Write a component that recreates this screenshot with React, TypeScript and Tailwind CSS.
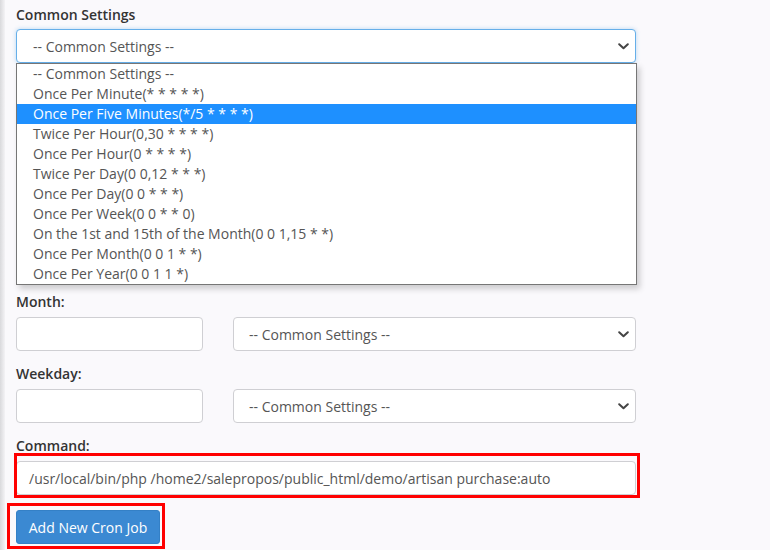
import React from "react";

const font = { fontFamily: '"Open Sans", "Liberation Sans", sans-serif' };

const Chevron = () => (
  <svg width="11" height="7" viewBox="0 0 11 7" className="shrink-0">
    <path d="M1.2 1.2 L5.5 5.3 L9.8 1.2" fill="none" stroke="#444" strokeWidth="2" strokeLinecap="round" strokeLinejoin="round" />
  </svg>
);

const FakeSelect = ({ focused = false, wide = false }: { focused?: boolean; wide?: boolean }) => (
  <div
    className={
      "h-[34px] bg-white rounded-[4px] border flex items-center justify-between pr-[6px] text-[14px] text-[#555] " +
      (wide ? "pl-[16px] " : "pl-[15px] ") +
      (focused
        ? "border-[#66afe9] shadow-[0_0_4px_rgba(102,175,233,0.45)]"
        : "border-[#cfcfd3]")
    }
  >
    <span>-- Common Settings --</span>
    <Chevron />
  </div>
);

const options = [
  "-- Common Settings --",
  "Once Per Minute(* * * * *)",
  "Once Per Five Minutes(*/5 * * * *)",
  "Twice Per Hour(0,30 * * * *)",
  "Once Per Hour(0 * * * *)",
  "Twice Per Day(0 0,12 * * *)",
  "Once Per Day(0 0 * * *)",
  "Once Per Week(0 0 * * 0)",
  "On the 1st and 15th of the Month(0 0 1,15 * *)",
  "Once Per Month(0 0 1 * *)",
  "Once Per Year(0 0 1 1 *)",
];

const Row = ({ label, gap = "mt-[14px]" }: { label: string; gap?: string }) => (
  <div className={gap}>
    <div className="h-5 leading-5 text-[14px] font-semibold text-[#333]">{label}</div>
    <div className="mt-[5px] flex gap-[30px]">
      <div className="w-[187px] h-[34px] bg-white border border-[#cfcfd3] rounded-[4px]" />
      <div className="flex-1">
        <FakeSelect />
      </div>
    </div>
  </div>
);

export default function App() {
  return (
    <div className="w-[770px] h-[550px] bg-[#faf9fc] flex overflow-hidden" style={font}>
      <div className="w-[5px] h-full bg-gradient-to-r from-[#d9d9dc] to-[#f4f3f6]" />
      <div className="pl-[11px] pt-[5px] w-[631px]">
        <div className="h-5 leading-5 text-[14px] font-semibold text-[#333]">Common Settings</div>
        <div className="mt-[4px] relative">
          <FakeSelect focused wide />
          <div className="absolute left-0 top-full w-[621px] z-10 bg-white border border-[#767676] shadow-[3px_4px_6px_rgba(0,0,0,0.18)]">
            {options.map((o, i) => (
              <div
                key={o}
                className={
                  "h-5 leading-5 pl-[16px] text-[14px] " +
                  (i === 2 ? "bg-[#1e90ff] text-white" : "text-[#555]")
                }
              >
                {o}
              </div>
            ))}
          </div>
        </div>

        {/* space occupied by the rows hidden behind the open list */}
        <div className="h-[215px]" />

        <Row label="Month:" />
        <Row label="Weekday:" gap="mt-[13px]" />

        <div className="mt-[13px]">
          <div className="h-5 leading-5 text-[14px] font-semibold text-[#333]">Command:</div>
          <div className="mt-[5px] relative">
            <div className="h-[34px] bg-white border border-[#cfcfd3] rounded-[4px] flex items-center pl-[12px] text-[14px] text-[#555]">
              /usr/local/bin/php /home2/salepropos/public_html/demo/artisan purchase:auto
            </div>
            <div className="absolute -left-[2px] -top-[8px] w-[626px] h-[45px] border-[3px] border-[#ff0000] pointer-events-none" />
          </div>
        </div>

        <div className="mt-[15px] relative w-[144px]">
          <button className="w-[144px] h-[34px] rounded-[3px] bg-[#3b89d2] border border-[#3480c6] text-white text-[14px] flex items-center justify-center">
            Add New Cron Job
          </button>
          <div className="absolute -left-[9px] -top-[7px] w-[158px] h-[46px] border-[3px] border-[#ff0000] pointer-events-none" />
        </div>
      </div>
    </div>
  );
}
